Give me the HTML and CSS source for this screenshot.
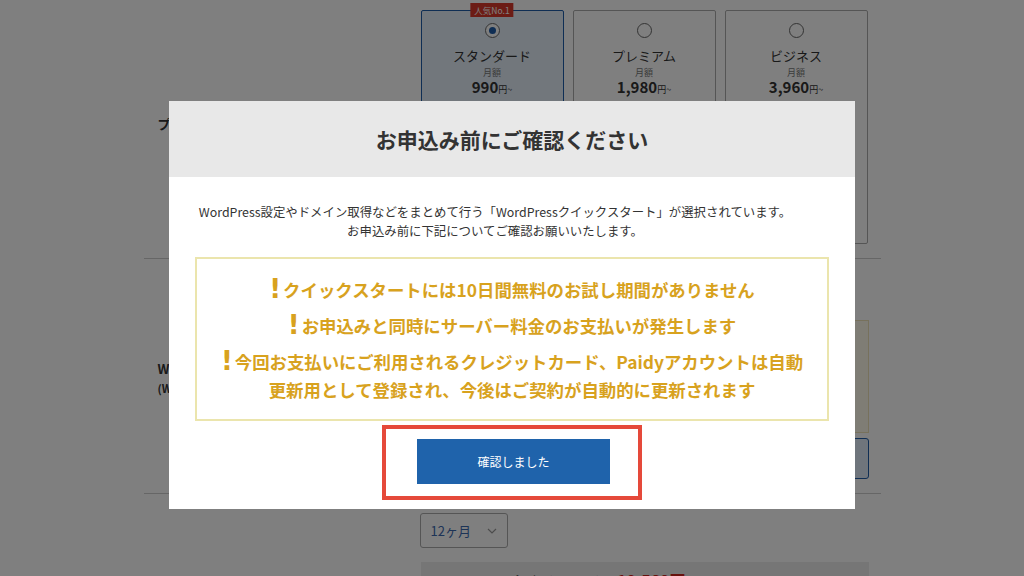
FILE: index.html
```html
<!DOCTYPE html>
<html lang="ja">
<head>
  <meta charset="UTF-8">
  <meta name="viewport" content="width=device-width, initial-scale=1.0">
  <title>お申込み</title>
  <link rel="stylesheet" href="styles.css">
</head>
<body>
  <div class="page">
    <div class="row row-plan">
      <div class="label">プラン</div>
      <div class="content plans">
        <div class="plan selected">
          <span class="badge">人気No.1</span>
          <span class="radio"></span>
          <div class="plan-name">スタンダード</div>
          <div class="plan-unit">月額</div>
          <div class="plan-price">990<small>円~</small></div>
        </div>
        <div class="plan">
          <span class="radio"></span>
          <div class="plan-name">プレミアム</div>
          <div class="plan-unit">月額</div>
          <div class="plan-price">1,980<small>円~</small></div>
        </div>
        <div class="plan">
          <span class="radio"></span>
          <div class="plan-name">ビジネス</div>
          <div class="plan-unit">月額</div>
          <div class="plan-price">3,960<small>円~</small></div>
        </div>
      </div>
    </div>

    <div class="row row-qs">
      <div class="label">WordPress クイックスタート<small>(WordPress簡単セットアップ)</small></div>
      <div class="content">
        <div class="qs-choice">利用する</div>
        <div class="qs-note">クイックスタートをご利用の場合、お試し期間はありません。</div>
        <div class="qs-btn">利用する</div>
      </div>
    </div>

    <div class="row row-term">
      <div class="label">サーバー契約期間</div>
      <div class="content">
        <div class="select">
          <span>12ヶ月</span>
          <svg width="10" height="6" viewBox="0 0 10 6"><path d="M1 1l4 4 4-4" fill="none" stroke="#999" stroke-width="1.2"/></svg>
        </div>
        <div class="total">合計（12ヶ月）：<b>10,560円</b></div>
      </div>
    </div>
  </div>

  <div class="overlay">
    <div class="modal">
      <div class="modal-head">お申込み前にご確認ください</div>
      <div class="modal-body">
        <p class="lead">WordPress設定やドメイン取得などをまとめて行う「WordPressクイックスタート」が選択されています。<br>お申込み前に下記についてご確認お願いいたします。</p>
        <div class="notice">
          <p><span class="mark">!</span>クイックスタートには10日間無料のお試し期間がありません</p>
          <p><span class="mark">!</span>お申込みと同時にサーバー料金のお支払いが発生します</p>
          <p><span class="mark">!</span>今回お支払いにご利用されるクレジットカード、Paidyアカウントは自動<br>更新用として登録され、今後はご契約が自動的に更新されます</p>
        </div>
        <div class="confirm-wrap">
          <button class="confirm">確認しました</button>
        </div>
      </div>
    </div>
  </div>
</body>
</html>
```

FILE: styles.css
```css
body {
  margin: 0;
  font-family: "Noto Sans CJK JP", "Noto Sans", sans-serif;
  color: #333;
  background: #fff;
  height: 576px;
  overflow: hidden;
}

.page {
  width: 737px;
  margin: 0 auto;
}

.row {
  display: flex;
  border-bottom: 1px solid #ccc;
}

.label {
  width: 263px;
  padding-left: 14px;
  font-size: 13px;
  font-weight: bold;
  display: flex;
  flex-direction: column;
  justify-content: center;
}

.label small {
  font-size: 11px;
  margin-top: 2px;
}

.content {
  width: 448px;
}

/* plans */
.row-plan {
  padding: 10px 0 14px;
}

.row-plan .label {
  padding-bottom: 8px;
}

.plans {
  display: grid;
  grid-template-columns: 143px 143px 143px;
  gap: 9px;
}

.plan {
  position: relative;
  height: 232px;
  border: 1px solid #aaa;
  border-radius: 2px;
  text-align: center;
}

.plan.selected {
  background: #e4eef9;
  border-color: #1e5ca8;
}

.badge {
  position: absolute;
  top: -8px;
  left: 50%;
  transform: translateX(-50%);
  background: #d8392b;
  color: #fff;
  font-size: 8.5px;
  line-height: 14px;
  padding: 0 4px;
}

.radio {
  display: block;
  width: 13px;
  height: 13px;
  margin: 12px auto 0;
  border: 1px solid #666;
  border-radius: 50%;
  background: #fff;
  position: relative;
}

.selected .radio::after {
  content: "";
  position: absolute;
  top: 3px;
  left: 3px;
  width: 7px;
  height: 7px;
  border-radius: 50%;
  background: #1e5ca8;
}

.plan-name {
  font-size: 13px;
  margin-top: 9px;
  line-height: 18px;
}

.plan-unit {
  font-size: 9px;
  color: #777;
  line-height: 12px;
  margin-top: 2px;
}

.plan-price {
  font-size: 15px;
  font-weight: bold;
  line-height: 16px;
}

.plan-price small {
  font-size: 9px;
  font-weight: normal;
}

/* quick start */
.row-qs {
  padding: 0 0 14px;
}

.row-qs .label {
  padding-top: 16px;
}

.qs-choice {
  height: 61px;
  font-size: 13px;
  line-height: 61px;
}

.qs-note {
  height: 113px;
  border: 1px solid #eee2b8;
  background: #fffbea;
  font-size: 12px;
  padding: 20px 12px 0;
  box-sizing: border-box;
}

.qs-btn {
  margin-top: 5px;
  height: 41px;
  box-sizing: border-box;
  border: 1px solid #1e5ca8;
  border-radius: 3px;
  background: #deebf8;
  color: #1e5ca8;
  font-size: 13px;
  line-height: 39px;
  text-align: center;
}

/* term */
.row-term {
  border-bottom: none;
  padding-top: 19px;
}

.row-term .label {
  justify-content: flex-start;
  padding-top: 110px;
}

.select {
  width: 88px;
  height: 35px;
  margin-left: -1px;
  border: 1px solid #aaa;
  border-radius: 3px;
  display: flex;
  align-items: center;
  justify-content: space-between;
  padding: 0 10px;
  box-sizing: border-box;
  font-size: 13px;
  color: #3a68ae;
}

.total {
  margin-top: 14px;
  height: 80px;
  background: #ececec;
  font-size: 14px;
  padding-top: 6px;
  padding-left: 90px;
  box-sizing: border-box;
}

.total b {
  color: #d0221a;
  font-size: 16px;
}

/* modal */
.overlay {
  position: fixed;
  inset: 0;
  background: rgba(0, 0, 0, 0.5);
  display: flex;
  justify-content: center;
  align-items: flex-start;
  padding-top: 101px;
}

.modal {
  width: 686px;
  height: 408px;
  background: #fff;
}

.modal-head {
  height: 76px;
  background: #e8e8e8;
  font-size: 21px;
  font-weight: bold;
  line-height: 76px;
  text-align: center;
  color: #333;
}

.modal-body {
  padding: 26px 26px 9px;
}

.lead {
  margin: 0;
  padding-right: 34px;
  font-size: 12.4px;
  line-height: 19px;
  text-align: center;
  color: #333;
}

.notice {
  margin-top: 16px;
  border: 2px solid #ebe5ad;
  padding: 16px 0 15px;
  text-align: center;
  color: #d8a21e;
  font-size: 17.4px;
  font-weight: bold;
}

.notice p {
  margin: 0 0 7px;
  line-height: 28px;
}

.notice p:last-child {
  margin-bottom: 0;
}

.mark {
  font-size: 26px;
  font-family: "DejaVu Sans", sans-serif;
  font-weight: bold;
  margin-right: 2px;
  vertical-align: -1px;
}

.confirm-wrap {
  width: 260px;
  box-sizing: border-box;
  margin: 4px auto 0;
  border: 4px solid #e5493a;
  padding: 10px 28px 12px 31px;
}

.confirm {
  display: block;
  width: 193px;
  height: 45px;
  border: none;
  background: #1f63ab;
  color: #fff;
  font-family: inherit;
  font-size: 12px;
  cursor: pointer;
}
```
